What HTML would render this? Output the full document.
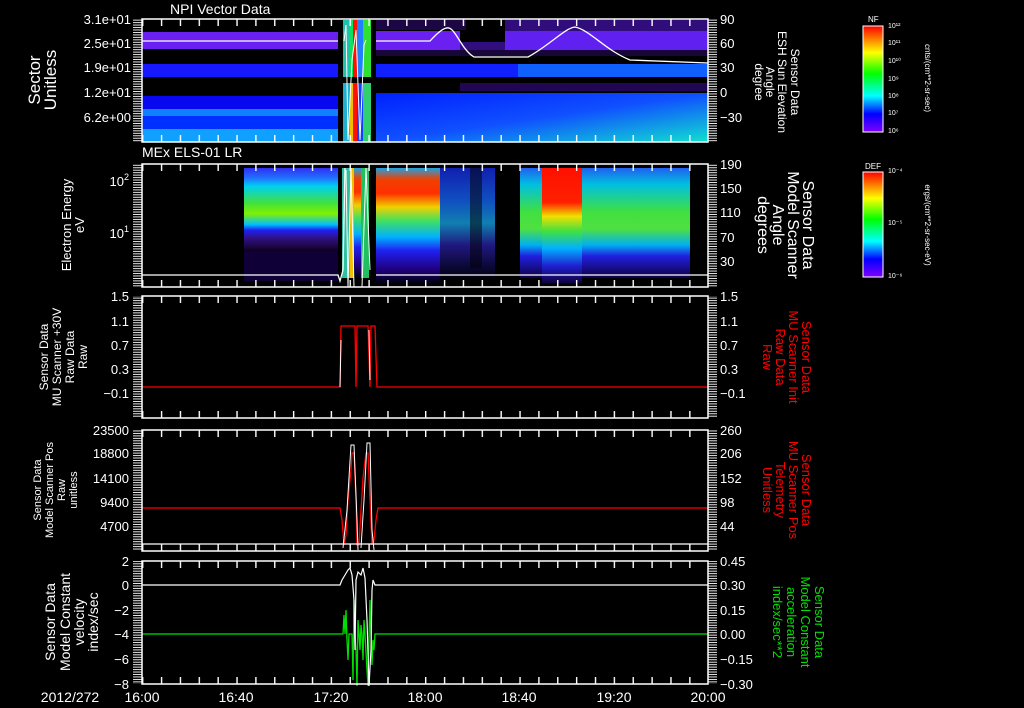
<!DOCTYPE html>
<html><head><meta charset="utf-8">
<style>
html,body{margin:0;padding:0;background:#000;}
svg{display:block;}
text{font-family:"Liberation Sans",sans-serif;fill:#fff;}
text.r{fill:#ff0000;}
text.g{fill:#00e000;}
</style></head>
<body>
<svg width="1024" height="708" viewBox="0 0 1024 708" xmlns="http://www.w3.org/2000/svg">
<defs>
<pattern id="tx" x="142" y="0" width="18.867" height="708" patternUnits="userSpaceOnUse"><rect x="0" y="0" width="1.4" height="708" fill="#fff"/></pattern>
<pattern id="ty" x="0" y="0" width="20" height="2.46" patternUnits="userSpaceOnUse"><rect x="0" y="0" width="20" height="0.9" fill="#fff"/></pattern>
<linearGradient id="nf" x1="0" y1="1" x2="0" y2="0">
<stop offset="0" stop-color="#8000ff"/><stop offset="0.17" stop-color="#0000ff"/><stop offset="0.34" stop-color="#00ffff"/><stop offset="0.55" stop-color="#00ff00"/><stop offset="0.75" stop-color="#ffff00"/><stop offset="1" stop-color="#ff0000"/></linearGradient>
<linearGradient id="s2a" x1="0" y1="0" x2="0" y2="1">
<stop offset="0" stop-color="#3030f0"/><stop offset="0.12" stop-color="#2070ff"/><stop offset="0.22" stop-color="#00d0f0"/><stop offset="0.42" stop-color="#40e040"/><stop offset="0.55" stop-color="#80f000"/><stop offset="0.68" stop-color="#00c0ff"/><stop offset="0.75" stop-color="#2020f0"/><stop offset="0.85" stop-color="#301080"/><stop offset="1" stop-color="#100020"/></linearGradient>
<linearGradient id="s2b" x1="0" y1="0" x2="0" y2="1">
<stop offset="0" stop-color="#20a0e0"/><stop offset="0.1" stop-color="#f04000"/><stop offset="0.22" stop-color="#ff3000"/><stop offset="0.34" stop-color="#f0d000"/><stop offset="0.46" stop-color="#40e060"/><stop offset="0.6" stop-color="#00b0ff"/><stop offset="0.72" stop-color="#2020f0"/><stop offset="0.88" stop-color="#200080"/><stop offset="1" stop-color="#000010"/></linearGradient>
<linearGradient id="s2c" x1="0" y1="0" x2="0" y2="1">
<stop offset="0" stop-color="#1020b0"/><stop offset="0.3" stop-color="#1050c0"/><stop offset="0.5" stop-color="#1080b0"/><stop offset="0.7" stop-color="#201880"/><stop offset="1" stop-color="#000010"/></linearGradient>
<linearGradient id="s2d" x1="0" y1="0" x2="0" y2="1">
<stop offset="0" stop-color="#ff1000"/><stop offset="0.3" stop-color="#ff2000"/><stop offset="0.42" stop-color="#f0e000"/><stop offset="0.55" stop-color="#40e040"/><stop offset="0.7" stop-color="#00b0ff"/><stop offset="0.85" stop-color="#2020d0"/><stop offset="1" stop-color="#100040"/></linearGradient>
<linearGradient id="s2e" x1="0" y1="0" x2="0" y2="1">
<stop offset="0" stop-color="#2060f0"/><stop offset="0.15" stop-color="#00c0e0"/><stop offset="0.4" stop-color="#40e040"/><stop offset="0.55" stop-color="#50e040"/><stop offset="0.7" stop-color="#00b0f0"/><stop offset="0.8" stop-color="#2020e0"/><stop offset="1" stop-color="#100040"/></linearGradient>
<linearGradient id="p1r" x1="0" y1="0" x2="1" y2="1">
<stop offset="0" stop-color="#0020ff"/><stop offset="0.5" stop-color="#1050ff"/><stop offset="1" stop-color="#10e0d0"/></linearGradient>
</defs>

<!-- ============ PANEL 1 ============ -->
<text x="170" y="14" font-size="14">NPI Vector Data</text>
<rect x="142" y="32" width="196" height="17" fill="#6a20f0"/>
<rect x="142" y="64" width="196" height="13" fill="#1818ff"/>
<rect x="142" y="96" width="196" height="13" fill="#0808f0"/>
<rect x="142" y="109" width="196" height="7" fill="#1080ff"/>
<rect x="142" y="116" width="196" height="13" fill="#0030ff"/>
<rect x="142" y="129" width="196" height="13" fill="#10a0ff"/>
<rect x="343" y="20" width="7" height="57" fill="#20c0b0"/>
<rect x="350" y="20" width="3" height="57" fill="#10e060"/>
<rect x="353" y="20" width="4" height="57" fill="#ff1000"/>
<rect x="357" y="20" width="6" height="57" fill="#2080ff"/>
<rect x="363" y="20" width="8" height="57" fill="#30e030"/>
<rect x="343" y="83" width="7" height="59" fill="#20b0d0"/>
<rect x="350" y="83" width="3" height="59" fill="#f0c000"/>
<rect x="353" y="83" width="4" height="59" fill="#ff1000"/>
<rect x="357" y="83" width="6" height="59" fill="#1040ff"/>
<rect x="363" y="83" width="8" height="59" fill="#30d070"/>
<rect x="376" y="20" width="90" height="10" fill="#5010c0" opacity="0.35"/>
<rect x="505" y="20" width="203" height="11" fill="#5a18e0" opacity="0.55"/>
<rect x="376" y="31" width="84" height="19" fill="#6a20f0"/>
<rect x="505" y="31" width="203" height="19" fill="#6020f0"/>
<rect x="460" y="42" width="45" height="8" fill="#5018d0" opacity="0.6"/>
<rect x="376" y="50" width="332" height="6" fill="#5010c0" opacity="0.3"/>
<rect x="376" y="64" width="332" height="13" fill="#1020ff"/>
<rect x="518" y="64" width="190" height="13" fill="#1060ff"/>
<rect x="460" y="83" width="248" height="8" fill="#5010d0" opacity="0.4"/>
<rect x="376" y="93" width="332" height="49" fill="url(#p1r)"/>
<path d="M142 41 H338 M376 41 H430 C440 30,446 27,449 28 C456 30,462 50,474 57 H528 C550 45,565 28,575 27 C590 30,605 50,630 60 L708 63" stroke="#fff" stroke-width="1.3" fill="none"/>
<path d="M344 41 L346 25 L348 140 L352 60 L356 30 L360 140 L364 45 L366 40" stroke="#fff" stroke-width="1" fill="none"/>
<rect x="142" y="19" width="566" height="123" fill="none" stroke="#fff" stroke-width="1.5"/>
<rect x="142" y="19" width="566" height="7" fill="url(#tx)"/>
<rect x="142" y="135" width="566" height="7" fill="url(#tx)"/>
<rect x="133" y="19" width="9" height="123" fill="url(#ty)"/>
<rect x="708" y="19" width="9" height="123" fill="url(#ty)"/>
<g font-size="13" text-anchor="end">
<text x="131" y="24">3.1e+01</text><text x="131" y="48">2.5e+01</text><text x="131" y="72">1.9e+01</text><text x="131" y="97">1.2e+01</text><text x="131" y="122">6.2e+00</text>
</g>
<g font-size="13">
<text x="720" y="24">90</text><text x="720" y="48">60</text><text x="720" y="72">30</text><text x="720" y="97">0</text><text x="720" y="122">−30</text>
</g>
<g font-size="17" text-anchor="middle">
<text transform="translate(40,80) rotate(-90)">Sector</text>
<text transform="translate(56,80) rotate(-90)">Unitless</text>
</g>
<g font-size="12" text-anchor="middle">
<text transform="translate(791,82) rotate(90)">Sensor Data</text>
<text transform="translate(778,82) rotate(90)">ESH Sun Elevation</text>
<text transform="translate(766,82) rotate(90)">Angle</text>
<text transform="translate(755,82) rotate(90)">degree</text>
</g>
<text x="868" y="22" font-size="8">NF</text>
<rect x="863" y="26" width="20" height="106" fill="url(#nf)" stroke="#fff" stroke-width="1"/>
<g font-size="7"><text x="888" y="28">10¹²</text><text x="888" y="45">10¹¹</text><text x="888" y="63">10¹⁰</text><text x="888" y="81">10⁹</text><text x="888" y="98">10⁸</text><text x="888" y="115">10⁷</text><text x="888" y="133">10⁶</text></g>
<text transform="translate(925,78) rotate(90)" font-size="8" text-anchor="middle">cnts/(cm**2-sr-sec)</text>

<!-- ============ PANEL 2 ============ -->
<text x="142" y="157" font-size="14">MEx ELS-01 LR</text>
<rect x="244" y="168" width="94" height="83" fill="url(#s2a)"/>
<rect x="244" y="251" width="94" height="30" fill="#200070" opacity="0.5"/>
<rect x="342" y="168" width="8" height="110" fill="#30c0a0"/>
<rect x="350" y="168" width="4" height="110" fill="#f0c000"/>
<rect x="354" y="168" width="7" height="110" fill="url(#s2b)"/>
<rect x="361" y="168" width="8" height="110" fill="#20c060"/>
<rect x="376" y="168" width="64" height="115" fill="url(#s2b)"/>
<rect x="440" y="168" width="55" height="110" fill="url(#s2c)"/>
<rect x="495" y="168" width="20" height="110" fill="#000"/>
<rect x="470" y="168" width="12" height="100" fill="#000" opacity="0.5"/>
<rect x="520" y="168" width="22" height="110" fill="url(#s2e)"/>
<rect x="542" y="168" width="40" height="115" fill="url(#s2d)"/>
<rect x="582" y="168" width="108" height="110" fill="url(#s2e)"/>
<path d="M142 275 H338 L340 281 L343 270 L345 168 M376 275 H708" stroke="#fff" stroke-width="1.3" fill="none"/>
<path d="M346 170 L348 287 L351 168 L354 287 M362 287 L366 168 L370 270" stroke="#fff" stroke-width="1" fill="none"/>
<rect x="142" y="164" width="566" height="123" fill="none" stroke="#fff" stroke-width="1.5"/>
<rect x="142" y="164" width="566" height="7" fill="url(#tx)"/>
<rect x="142" y="280" width="566" height="7" fill="url(#tx)"/>
<rect x="133" y="164" width="9" height="123" fill="url(#ty)"/>
<rect x="708" y="164" width="9" height="123" fill="url(#ty)"/>
<g font-size="13" text-anchor="end"><text x="129" y="186">10<tspan font-size="9" dy="-6">2</tspan></text><text x="129" y="238">10<tspan font-size="9" dy="-6">1</tspan></text></g>
<g font-size="13"><text x="720" y="169">190</text><text x="720" y="193">150</text><text x="720" y="217">110</text><text x="720" y="242">70</text><text x="720" y="266">30</text></g>
<g font-size="13" text-anchor="middle">
<text transform="translate(71,225) rotate(-90)">Electron Energy</text>
<text transform="translate(84,225) rotate(-90)">eV</text>
</g>
<g font-size="16" text-anchor="middle">
<text transform="translate(803,225) rotate(90)">Sensor Data</text>
<text transform="translate(788,225) rotate(90)">Model Scanner</text>
<text transform="translate(773,225) rotate(90)">Angle</text>
<text transform="translate(758,225) rotate(90)">degrees</text>
</g>
<text x="865" y="169" font-size="8">DEF</text>
<rect x="863" y="172" width="20" height="105" fill="url(#nf)" stroke="#fff" stroke-width="1"/>
<g font-size="7"><text x="888" y="173">10⁻⁴</text><text x="888" y="225">10⁻⁵</text><text x="888" y="278">10⁻⁶</text></g>
<text transform="translate(925,225) rotate(90)" font-size="8" text-anchor="middle">ergs/(cm**2-sr-sec-eV)</text>

<!-- ============ PANEL 3 ============ -->
<path d="M142 387 H340 L341 326 H355 L356 387 L357 326 H368 L370 387 L371 326 H375 L377 387 H708" stroke="#ff0000" stroke-width="1.3" fill="none"/>
<path d="M340 387 L341 340 M369 330 L370 380" stroke="#fff" stroke-width="1" fill="none"/>
<rect x="142" y="296" width="566" height="122" fill="none" stroke="#fff" stroke-width="1.5"/>
<rect x="142" y="296" width="566" height="7" fill="url(#tx)"/>
<rect x="142" y="411" width="566" height="7" fill="url(#tx)"/>
<rect x="133" y="296" width="9" height="122" fill="url(#ty)"/>
<rect x="708" y="296" width="9" height="122" fill="url(#ty)"/>
<g font-size="13" text-anchor="end"><text x="129" y="301">1.5</text><text x="129" y="326">1.1</text><text x="129" y="350">0.7</text><text x="129" y="374">0.3</text><text x="129" y="398">−0.1</text></g>
<g font-size="13"><text x="720" y="301">1.5</text><text x="720" y="326">1.1</text><text x="720" y="350">0.7</text><text x="720" y="374">0.3</text><text x="720" y="398">−0.1</text></g>
<g font-size="12" text-anchor="middle">
<text transform="translate(48,357) rotate(-90)">Sensor Data</text>
<text transform="translate(61,357) rotate(-90)">MU Scanner +30V</text>
<text transform="translate(74,357) rotate(-90)">Raw Data</text>
<text transform="translate(87,357) rotate(-90)">Raw</text>
</g>
<g font-size="13" text-anchor="middle">
<text class="r" transform="translate(802,357) rotate(90)">Sensor Data</text>
<text class="r" transform="translate(789,357) rotate(90)">MU Scanner Init</text>
<text class="r" transform="translate(776,357) rotate(90)">Raw Data</text>
<text class="r" transform="translate(763,357) rotate(90)">Raw</text>
</g>

<!-- ============ PANEL 4 ============ -->
<path d="M142 508 H340 L342 520 L344 545 L346 535 L348 500 L351 470 L352 453 H354 L356 500 L357 545 L359 545 L361 510 L363 478 L366 453 H368 L370 500 L372 545 L374 540 L376 520 L378 508 H708" stroke="#ff0000" stroke-width="1.3" fill="none"/>
<path d="M343 548 L347 510 L351 445 H354 L357 520 L358 550 M361 548 L364 500 L367 443 H370 L372 530 L374 550" stroke="#fff" stroke-width="1" fill="none"/>
<path d="M142 544 H708" stroke="#fff" stroke-width="1.3"/>
<rect x="142" y="430" width="566" height="121" fill="none" stroke="#fff" stroke-width="1.5"/>
<rect x="142" y="430" width="566" height="7" fill="url(#tx)"/>
<rect x="142" y="544" width="566" height="7" fill="url(#tx)"/>
<rect x="133" y="430" width="9" height="121" fill="url(#ty)"/>
<rect x="708" y="430" width="9" height="121" fill="url(#ty)"/>
<g font-size="13" text-anchor="end"><text x="129" y="435">23500</text><text x="129" y="458">18800</text><text x="129" y="483">14100</text><text x="129" y="507">9400</text><text x="129" y="531">4700</text></g>
<g font-size="13"><text x="720" y="435">260</text><text x="720" y="458">206</text><text x="720" y="483">152</text><text x="720" y="507">98</text><text x="720" y="531">44</text></g>
<g font-size="11" text-anchor="middle">
<text transform="translate(41,490) rotate(-90)">Sensor Data</text>
<text transform="translate(53,490) rotate(-90)">Model Scanner Pos</text>
<text transform="translate(65,490) rotate(-90)">Raw</text>
<text transform="translate(77,490) rotate(-90)">unitless</text>
</g>
<g font-size="13" text-anchor="middle">
<text class="r" transform="translate(802,490) rotate(90)">Sensor Data</text>
<text class="r" transform="translate(789,490) rotate(90)">MU Scanner Pos</text>
<text class="r" transform="translate(776,490) rotate(90)">Telemetry</text>
<text class="r" transform="translate(763,490) rotate(90)">Unitless</text>
</g>

<!-- ============ PANEL 5 ============ -->
<path d="M142 634 H343 L344 615 L345 634 L346 610 L347 640 L348 660 L349 634 H352 L353 680 L354 600 L355 634 L356 650 L357 686 L358 620 L359 634 L360 650 L361 625 L362 634 L363 660 L364 620 L365 634 L367 670 L368 686 L369 640 L370 600 L371 634 L372 665 L373 640 L374 650 L375 634 H708" stroke="#00e000" stroke-width="1.3" fill="none"/>
<path d="M142 585 H340 L342 580 L345 575 L348 570 L350 568 L352 575 L354 600 L355 650 L356 580 L358 572 L361 575 L363 568 L365 578 L367 620 L369 686 L371 650 L372 590 L373 580 L375 585 H708" stroke="#fff" stroke-width="1.2" fill="none"/>
<rect x="142" y="561" width="566" height="123" fill="none" stroke="#fff" stroke-width="1.5"/>
<rect x="142" y="561" width="566" height="7" fill="url(#tx)"/>
<rect x="142" y="677" width="566" height="7" fill="url(#tx)"/>
<rect x="133" y="561" width="9" height="123" fill="url(#ty)"/>
<rect x="708" y="561" width="9" height="123" fill="url(#ty)"/>
<g font-size="13" text-anchor="end"><text x="129" y="566">2</text><text x="129" y="590">0</text><text x="129" y="615">−2</text><text x="129" y="639">−4</text><text x="129" y="664">−6</text><text x="129" y="689">−8</text></g>
<g font-size="13"><text x="720" y="566">0.45</text><text x="720" y="590">0.30</text><text x="720" y="615">0.15</text><text x="720" y="639">0.00</text><text x="720" y="664">−0.15</text><text x="720" y="689">−0.30</text></g>
<g font-size="14" text-anchor="middle">
<text transform="translate(55,622) rotate(-90)">Sensor Data</text>
<text transform="translate(70,622) rotate(-90)">Model Constant</text>
<text transform="translate(84,622) rotate(-90)">velocity</text>
<text transform="translate(98,622) rotate(-90)">index/sec</text>
</g>
<g font-size="13" text-anchor="middle">
<text class="g" transform="translate(815,622) rotate(90)">Sensor Data</text>
<text class="g" transform="translate(801,622) rotate(90)">Model Constant</text>
<text class="g" transform="translate(787,622) rotate(90)">acceleration</text>
<text class="g" transform="translate(773,622) rotate(90)">index/sec**2</text>
</g>

<g font-size="14" text-anchor="middle">
<text x="70" y="702">2012/272</text>
<text x="142" y="702">16:00</text><text x="236" y="702">16:40</text><text x="331" y="702">17:20</text><text x="425" y="702">18:00</text><text x="519" y="702">18:40</text><text x="614" y="702">19:20</text><text x="708" y="702">20:00</text>
</g>
</svg>
</body></html>
